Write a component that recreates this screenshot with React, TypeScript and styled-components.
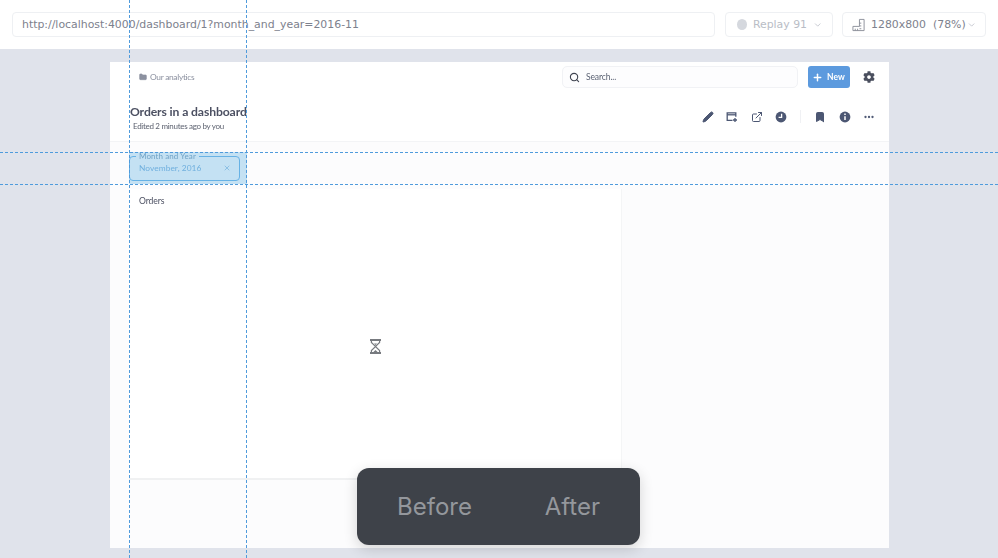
import React from 'react';
import styled, { createGlobalStyle } from 'styled-components';
import { ChevronDown, Search, Plus, Pencil, X, Folder, Bookmark, MoreHorizontal, ExternalLink } from 'lucide-react';
import { FaCog } from 'react-icons/fa';

const COLOR_STAGE = '#e0e3eb';
const COLOR_GUIDE = '#4f9bdc';
const COLOR_INK = '#4c5773';

const GlobalStyle = createGlobalStyle`
  html, body {
    margin: 0;
    padding: 0;
    background: #fff;
    overflow: hidden;
  }
`;

const Page = styled.div`
  position: relative;
  width: 998px;
  height: 558px;
  display: flex;
  flex-direction: column;
  overflow: hidden;
  font-family: "DejaVu Sans", sans-serif;
`;

const Toolbar = styled.div`
  height: 49px;
  box-sizing: border-box;
  padding: 12px 12px 0;
  display: flex;
  gap: 9.5px;
  background: #fff;
`;

const Field = styled.div<{ $width?: number; $muted?: boolean }>`
  flex: ${(p) => (p.$width ? `0 0 ${p.$width}px` : '1')};
  min-width: 0;
  height: 25px;
  box-sizing: border-box;
  border: 1px solid #eef0f3;
  border-radius: 4px;
  display: flex;
  align-items: center;
  gap: 6px;
  padding: 0 ${(p) => (p.$width ? 9 : 9)}px;
  font-size: 10.9px;
  white-space: nowrap;
  color: ${(p) => (p.$muted ? '#b9bdc6' : '#7d818d')};
`;

const ReplayDot = styled.span`
  width: 11px;
  height: 11px;
  border-radius: 50%;
  background: #d5d8de;
  margin: 0 0 0 2px;
`;

const Ratio = styled.span`
  margin-left: 1px;
`;

const Stage = styled.div`
  flex: 1;
  min-height: 0;
  display: flex;
  padding: 13px 0 10px 110px;
  background: ${COLOR_STAGE};
`;

const Frame = styled.div`
  width: 779px;
  display: flex;
  flex-direction: column;
  background: #fff;
  font-family: Lato, sans-serif;
  color: ${COLOR_INK};
  filter: blur(0.3px);
`;

const NavBar = styled.div`
  height: 33px;
  flex: none;
  box-sizing: border-box;
  display: flex;
  align-items: center;
  padding: 0 14px 3px 29px;
`;

const Crumb = styled.div`
  display: flex;
  align-items: center;
  gap: 3px;
  flex: 1;
  margin-top: -1px;
  font-size: 8.4px;
  letter-spacing: -0.3px;
  color: #8c91a0;
`;

const SearchBox = styled.div`
  width: 236px;
  height: 22px;
  box-sizing: border-box;
  border: 1px solid #f1f2f5;
  border-radius: 5px;
  background: #fdfdfe;
  display: flex;
  align-items: center;
  gap: 6px;
  padding: 0 6px;
  font-size: 8.5px;
  letter-spacing: -0.1px;
  color: #5b6273;
`;

const NewButton = styled.div`
  width: 42px;
  height: 22px;
  box-sizing: border-box;
  margin-left: 10px;
  border-radius: 3px;
  background: #5c9ade;
  color: #fff;
  display: flex;
  align-items: center;
  gap: 4px;
  padding-left: 4px;
  font-size: 8.5px;
  font-weight: 700;
`;

const GearSlot = styled.div`
  display: flex;
  margin-left: 13px;
  color: #4a4f5e;
`;

const Header = styled.div`
  height: 47px;
  flex: none;
  box-sizing: border-box;
  display: flex;
  align-items: center;
  padding: 0 14px 3px 20px;
  border-bottom: 1px solid #f3f4f6;
`;

const TitleBlock = styled.div`
  flex: 1;
`;

const Title = styled.div`
  margin-top: 2px;
  font-size: 12.2px;
  line-height: 15px;
  font-weight: 700;
  letter-spacing: -0.12px;
  color: #4c5062;
`;

const Subtitle = styled.div`
  margin: 2px 0 0 3px;
  font-size: 8px;
  line-height: 10px;
  letter-spacing: -0.3px;
  color: #5d6270;
`;

const Actions = styled.div`
  display: flex;
  align-items: center;
  gap: 12.5px;
  color: ${COLOR_INK};
`;

const ActionDivider = styled.span`
  width: 1px;
  height: 13px;
  margin-right: 1px;
  background: #f0f1f4;
`;

const Body = styled.div`
  flex: 1;
  min-height: 0;
  display: flex;
  flex-direction: column;
  background: #fcfcfd;
`;

const FilterBand = styled.div`
  height: 47px;
  flex: none;
  box-sizing: border-box;
  padding: 14px 0 0 19px;
`;

const FilterWidget = styled.div`
  position: relative;
  width: 111px;
  height: 25px;
  box-sizing: border-box;
  border: 1px solid #74b7e8;
  border-radius: 4px;
  display: flex;
  align-items: center;
  justify-content: space-between;
  padding: 0 8px 2px 9px;
  font-size: 8.4px;
  letter-spacing: 0.05px;
  color: #80b4dd;
`;

const FilterLegend = styled.span`
  position: absolute;
  top: -6px;
  left: 6px;
  padding: 0 3px;
  background: #fcfcfd;
  font-size: 8px;
  line-height: 10px;
  letter-spacing: 0.1px;
  color: #7f9fb8;
`;

const Card = styled.div`
  width: 493px;
  height: 291px;
  flex: none;
  box-sizing: border-box;
  margin-left: 19px;
  padding: 6px 10px 5px;
  background: #fff;
  border-right: 1px solid #f4f5f6;
  border-bottom: 2px solid #f0f1f2;
  display: flex;
  flex-direction: column;
`;

const CardTitle = styled.div`
  font-size: 8.6px;
  line-height: 12px;
  letter-spacing: -0.1px;
  color: #4c5062;
`;

const CardBody = styled.div`
  flex: 1;
  display: flex;
  align-items: center;
  justify-content: center;
  padding-top: 13px;
  color: #777a7f;
`;

const SelectionBox = styled.div`
  position: absolute;
  left: 129px;
  top: 152px;
  width: 118px;
  height: 32px;
  background: rgba(79, 167, 224, 0.32);
`;

const GuideV = styled.div<{ $x: number }>`
  position: absolute;
  top: 0;
  bottom: 0;
  left: ${(p) => p.$x}px;
  border-left: 1px dashed ${COLOR_GUIDE};
`;

const GuideH = styled.div<{ $y: number }>`
  position: absolute;
  left: 0;
  right: 0;
  top: ${(p) => p.$y}px;
  border-top: 1px dashed ${COLOR_GUIDE};
`;

const CompareBar = styled.div`
  position: absolute;
  left: 357px;
  top: 468px;
  width: 283px;
  height: 77px;
  box-sizing: border-box;
  padding: 0 40px;
  border-radius: 12px;
  background: #3e4249;
  box-shadow: 0 4px 14px rgba(0, 0, 0, 0.16);
  display: flex;
  align-items: center;
  justify-content: space-between;
  font-family: Inter, sans-serif;
  font-size: 24px;
  color: #94979c;
`;

// the dashboard action glyphs below aren't in the icon sets
const QuestionIcon = () => (
  <svg width="12" height="12" viewBox="0 0 12 12" fill="none" stroke="currentColor" strokeWidth="1.3">
    <path d="M6.5 9.4H1.2V1.8h8.6v4" />
    <path d="M1.2 3.8h8.6" />
    <path d="M9 7v4M7 9h4" />
  </svg>
);

const ClockIcon = () => (
  <svg width="12" height="12" viewBox="0 0 12 12">
    <circle cx="6" cy="6" r="5.4" fill="currentColor" />
    <path d="M6.6 2.8v3.6H3.6" fill="none" stroke="#fff" strokeWidth="1.3" />
  </svg>
);

const InfoIcon = () => (
  <svg width="12" height="12" viewBox="0 0 12 12">
    <circle cx="6" cy="6" r="5.4" fill="currentColor" />
    <path d="M6 5.2v3.8M6 2.6v1.4" fill="none" stroke="#fff" strokeWidth="1.5" />
  </svg>
);

const SizeIcon = () => (
  <svg width="14" height="14" viewBox="0 0 14 14" fill="none" stroke="#8a8e99" strokeWidth="1">
    <path d="M1 13V8.5h7V1h5v12z" />
    <path d="M3.5 13v-2M6 13v-2M8 11h2M8 8h2M8 5h2" />
  </svg>
);

const HourglassIcon = () => (
  <svg width="13" height="15" viewBox="0 0 13 15" fill="none" stroke="currentColor">
    <path d="M1 1h11M1 14h11" strokeWidth="1.8" />
    <path d="M2.4 1v2.5L6.5 7.5l4.1-4V1M2.4 14v-2.5l4.1-4 4.1 4V14" strokeWidth="1.2" />
    <path d="M4.4 13l2.1-2 2.1 2zM5 4.6h3L6.5 6z" fill="currentColor" stroke="none" />
  </svg>
);

export default function App() {
  return (
    <Page>
      <GlobalStyle />
      <Toolbar>
        <Field>http://localhost:4000/dashboard/1?month_and_year=2016-11</Field>
        <Field $width={108} $muted>
          <ReplayDot />
          Replay 91
          <ChevronDown size={10} />
        </Field>
        <Field $width={144}>
          <SizeIcon />
          1280x800
          <Ratio>(78%)</Ratio>
          <ChevronDown size={10} color="#b9bdc6" style={{ marginLeft: -5 }} />
        </Field>
      </Toolbar>
      <Stage>
        <Frame>
          <NavBar>
            <Crumb>
              <Folder size={8} fill="#8c91a0" />
              Our analytics
            </Crumb>
            <SearchBox>
              <Search size={11} color="#3f4350" strokeWidth={2.4} />
              Search...
            </SearchBox>
            <NewButton>
              <Plus size={11} strokeWidth={3.2} />
              New
            </NewButton>
            <GearSlot>
              <FaCog size={12} />
            </GearSlot>
          </NavBar>
          <Header>
            <TitleBlock>
              <Title>Orders in a dashboard</Title>
              <Subtitle>Edited 2 minutes ago by you</Subtitle>
            </TitleBlock>
            <Actions>
              <Pencil size={12} fill="currentColor" strokeWidth={2} />
              <QuestionIcon />
              <ExternalLink size={12} strokeWidth={2} />
              <ClockIcon />
              <ActionDivider />
              <Bookmark size={12} fill="currentColor" strokeWidth={2} />
              <InfoIcon />
              <MoreHorizontal size={12} strokeWidth={2.6} />
            </Actions>
          </Header>
          <Body>
            <FilterBand>
              <FilterWidget>
                <FilterLegend>Month and Year</FilterLegend>
                November, 2016
                <X size={8} strokeWidth={2} />
              </FilterWidget>
            </FilterBand>
            <Card>
              <CardTitle>Orders</CardTitle>
              <CardBody>
                <HourglassIcon />
              </CardBody>
            </Card>
          </Body>
        </Frame>
      </Stage>
      <SelectionBox />
      <GuideV $x={129} />
      <GuideV $x={246} />
      <GuideH $y={152} />
      <GuideH $y={184} />
      <CompareBar>
        <span>Before</span>
        <span>After</span>
      </CompareBar>
    </Page>
  );
}
